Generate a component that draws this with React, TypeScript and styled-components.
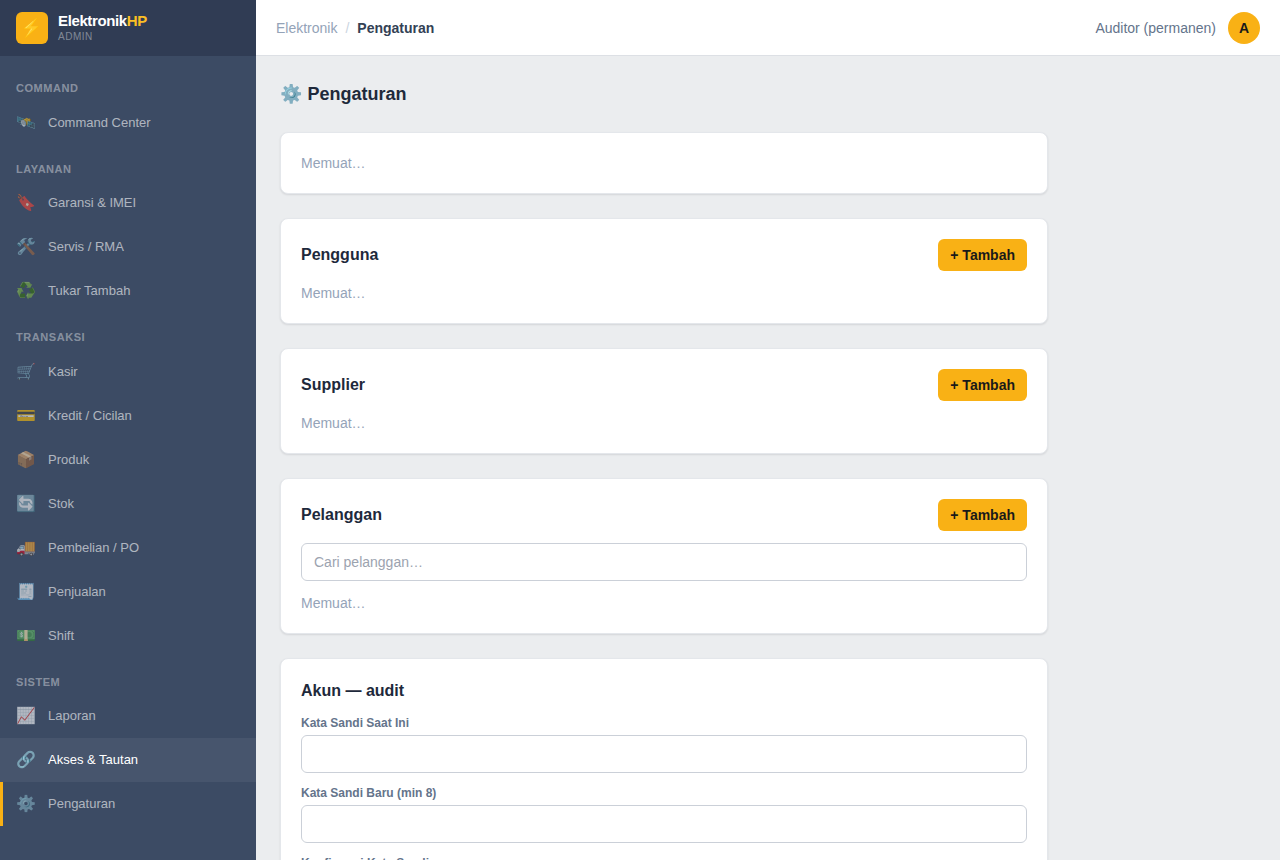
import React from "react";
import styled, { createGlobalStyle } from "styled-components";

const GlobalStyle = createGlobalStyle`
  *, *::before, *::after { box-sizing: border-box; }
  body {
    margin: 0;
    background: #ebedef;
    color: #1f2937;
    font-family: "Liberation Sans", Arial, "Noto Color Emoji", sans-serif;
    font-size: 14px;
    line-height: 1.5;
  }
  h1, h2, p, ul { margin: 0; padding: 0; }
  ul { list-style: none; }
  button, input { font: inherit; }
`;

const Shell = styled.div`
  display: flex;
  height: 100vh;
  overflow: hidden;
`;

const Sidebar = styled.aside`
  display: flex;
  flex-direction: column;
  flex: 0 0 256px;
  background: #3c4b64;
`;

const Brand = styled.div`
  display: flex;
  align-items: center;
  gap: 10px;
  height: 56px;
  flex-shrink: 0;
  padding: 0 16px;
  background: #303c54;
`;

const BrandMark = styled.span`
  display: flex;
  align-items: center;
  justify-content: center;
  width: 32px;
  height: 32px;
  border-radius: 6px;
  background: #f9b115;
  color: #1a1a1a;
  font-size: 18px;
`;

const BrandName = styled.div`
  color: #fff;
  font-size: 15px;
  font-weight: 700;
  line-height: 18px;
  letter-spacing: -0.025em;
`;

const BrandAccent = styled.span`
  color: #fbbf24;
`;

const BrandRole = styled.div`
  color: rgba(255, 255, 255, 0.4);
  font-size: 10px;
  line-height: 14px;
  letter-spacing: 0.05em;
`;

const Nav = styled.nav`
  flex: 1;
  padding: 8px 0;
  overflow-y: auto;
  scrollbar-width: none;
`;

const NavHeading = styled.h2`
  padding: 16px 16px 4px;
  color: rgba(255, 255, 255, 0.4);
  font-size: 11px;
  font-weight: 700;
  letter-spacing: 0.05em;
  text-transform: uppercase;
`;

const NavLink = styled.a<{ $current?: boolean; $lit?: boolean }>`
  display: flex;
  align-items: center;
  gap: 12px;
  height: 44px;
  padding: 0 16px 0 13px;
  border-left: 3px solid ${(p) => (p.$current ? "#f9b115" : "transparent")};
  background: ${(p) => (p.$lit ? "rgba(255, 255, 255, 0.06)" : "transparent")};
  color: ${(p) => (p.$lit ? "#fff" : "rgba(255, 255, 255, 0.6)")};
  font-size: 13px;
  text-decoration: none;
`;

const NavIcon = styled.span<{ $lit?: boolean }>`
  width: 20px;
  text-align: center;
  font-size: 16px;
  line-height: 24px;
  opacity: ${(p) => (p.$lit ? 0.85 : 1)};
`;

const Column = styled.div`
  display: flex;
  flex-direction: column;
  flex: 1;
  min-width: 0;
`;

const Topbar = styled.header`
  display: flex;
  align-items: center;
  justify-content: space-between;
  height: 56px;
  flex-shrink: 0;
  padding: 0 20px;
  border-bottom: 1px solid #dde0e5;
  background: #fff;
  line-height: 20px;
`;

const Breadcrumb = styled.nav`
  display: flex;
  gap: 8px;
`;

const CrumbLink = styled.a`
  color: #94a3b8;
  text-decoration: none;
`;

const CrumbSlash = styled.span`
  color: #cbd5e1;
`;

const CrumbCurrent = styled.span`
  color: #334155;
  font-weight: 700;
`;

const User = styled.div`
  display: flex;
  align-items: center;
  gap: 12px;
  color: #64748b;
`;

const Avatar = styled.span`
  display: flex;
  align-items: center;
  justify-content: center;
  width: 32px;
  height: 32px;
  border-radius: 50%;
  background: #f9b115;
  color: #1a1a1a;
  font-weight: 700;
`;

const Main = styled.main`
  flex: 1;
  padding: 24px;
  overflow-y: auto;
  scrollbar-width: none;
`;

const Stack = styled.div`
  display: flex;
  flex-direction: column;
  gap: 24px;
  max-width: 768px;
`;

const PageTitle = styled.h1`
  color: #1e293b;
  font-size: 18px;
  line-height: 28px;
`;

const Card = styled.section`
  display: flex;
  flex-direction: column;
  gap: 12px;
  padding: 20px;
  border: 1px solid #e4e7eb;
  border-radius: 8px;
  background: #fff;
  box-shadow: 0 1px 2px rgba(0, 0, 21, 0.1);
`;

const CardHead = styled.div`
  display: flex;
  align-items: center;
  justify-content: space-between;
`;

const CardTitle = styled.h2`
  color: #1e293b;
  font-size: 16px;
  line-height: 24px;
`;

const AddButton = styled.button`
  height: 32px;
  padding: 0 12px;
  border: 0;
  border-radius: 6px;
  background: #f9b115;
  color: #1a1a1a;
  font-size: 14px;
  font-weight: 700;
  line-height: 20px;
  cursor: pointer;
`;

const Status = styled.p`
  color: #94a3b8;
  line-height: 20px;
`;

const TextInput = styled.input`
  width: 100%;
  height: 38px;
  padding: 8px 12px;
  border: 1px solid #cbd0d8;
  border-radius: 6px;
  background: #fff;
  color: #1e293b;
  line-height: 20px;

  &::placeholder {
    color: #9ca3af;
    opacity: 1;
  }
`;

const Field = styled.div`
  display: flex;
  flex-direction: column;
  gap: 4px;
`;

const FieldLabel = styled.label`
  color: #64748b;
  font-size: 12px;
  font-weight: 700;
  line-height: 16px;
`;

const SaveButton = styled(AddButton)`
  align-self: flex-start;
`;

type Item = { icon: string; label: string; current?: boolean; lit?: boolean };

const groups: { title: string; items: Item[] }[] = [
  { title: "Command", items: [{ icon: "🛰️", label: "Command Center" }] },
  {
    title: "Layanan",
    items: [
      { icon: "🔖", label: "Garansi & IMEI" },
      { icon: "🛠️", label: "Servis / RMA" },
      { icon: "♻️", label: "Tukar Tambah" },
    ],
  },
  {
    title: "Transaksi",
    items: [
      { icon: "🛒", label: "Kasir" },
      { icon: "💳", label: "Kredit / Cicilan" },
      { icon: "📦", label: "Produk" },
      { icon: "🔄", label: "Stok" },
      { icon: "🚚", label: "Pembelian / PO" },
      { icon: "🧾", label: "Penjualan" },
      { icon: "💵", label: "Shift" },
    ],
  },
  {
    title: "Sistem",
    items: [
      { icon: "📈", label: "Laporan" },
      { icon: "🔗", label: "Akses & Tautan", lit: true },
      { icon: "⚙️", label: "Pengaturan", current: true },
    ],
  },
];

const passwordFields = [
  { id: "current-password", label: "Kata Sandi Saat Ini" },
  { id: "new-password", label: "Kata Sandi Baru (min 8)" },
  { id: "confirm-password", label: "Konfirmasi Kata Sandi" },
];

function ListCard({ title, children }: { title: string; children?: React.ReactNode }) {
  return (
    <Card>
      <CardHead>
        <CardTitle>{title}</CardTitle>
        <AddButton type="button">+ Tambah</AddButton>
      </CardHead>
      {children}
      <Status>Memuat…</Status>
    </Card>
  );
}

export default function App() {
  return (
    <>
      <GlobalStyle />
      <Shell>
        <Sidebar>
          <Brand>
            <BrandMark>⚡</BrandMark>
            <div>
              <BrandName>
                Elektronik<BrandAccent>HP</BrandAccent>
              </BrandName>
              <BrandRole>ADMIN</BrandRole>
            </div>
          </Brand>
          <Nav>
            {groups.map((group) => (
              <div key={group.title}>
                <NavHeading>{group.title}</NavHeading>
                <ul>
                  {group.items.map((item) => (
                    <li key={item.label}>
                      <NavLink
                        href="#"
                        $current={item.current}
                        $lit={item.lit}
                        aria-current={item.current ? "page" : undefined}
                      >
                        <NavIcon $lit={item.lit}>{item.icon}</NavIcon>
                        {item.label}
                      </NavLink>
                    </li>
                  ))}
                </ul>
              </div>
            ))}
          </Nav>
        </Sidebar>
        <Column>
          <Topbar>
            <Breadcrumb>
              <CrumbLink href="#">Elektronik</CrumbLink>
              <CrumbSlash>/</CrumbSlash>
              <CrumbCurrent>Pengaturan</CrumbCurrent>
            </Breadcrumb>
            <User>
              <span>Auditor (permanen)</span>
              <Avatar>A</Avatar>
            </User>
          </Topbar>
          <Main>
            <Stack>
              <PageTitle>⚙️ Pengaturan</PageTitle>
              <Card>
                <Status>Memuat…</Status>
              </Card>
              <ListCard title="Pengguna" />
              <ListCard title="Supplier" />
              <ListCard title="Pelanggan">
                <TextInput type="search" placeholder="Cari pelanggan…" aria-label="Cari pelanggan" />
              </ListCard>
              <Card as="form">
                <CardTitle>Akun — audit</CardTitle>
                {passwordFields.map((field) => (
                  <Field key={field.id}>
                    <FieldLabel htmlFor={field.id}>{field.label}</FieldLabel>
                    <TextInput id={field.id} type="password" />
                  </Field>
                ))}
                <SaveButton type="submit">Simpan</SaveButton>
              </Card>
            </Stack>
          </Main>
        </Column>
      </Shell>
    </>
  );
}
